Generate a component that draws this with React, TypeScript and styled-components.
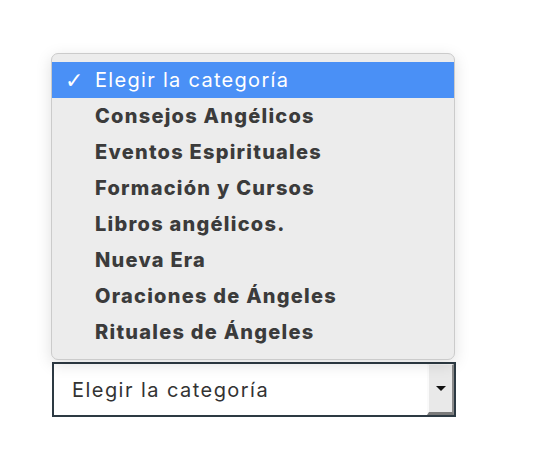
import React from 'react';
import styled, { createGlobalStyle } from 'styled-components';

const GlobalStyle = createGlobalStyle`
  html, body {
    margin: 0;
    padding: 0;
    background: #fff;
  }
  body {
    font-family: Inter, 'Noto Sans', sans-serif;
  }
`;

const Page = styled.div`
  width: 538px;
  height: 456px;
  box-sizing: border-box;
  padding: 53px 0 0 51px;
`;

// popup list of the native select; its shadow falls over the field below
const Menu = styled.ul`
  position: relative;
  z-index: 1;
  list-style: none;
  margin: 0;
  width: 404px;
  box-sizing: border-box;
  padding: 8px 0 9px;
  background: #ececec;
  border: 1px solid #cbcbcb;
  border-radius: 7px;
  box-shadow: 0 4px 16px rgba(0, 0, 0, 0.13);
`;

const Option = styled.li<{ $selected?: boolean }>`
  display: flex;
  align-items: center;
  height: 36px;
  padding: 0 0 0 13px;
  font-size: 20px;
  letter-spacing: ${({ $selected }) => ($selected ? '1.3px' : '1.25px')};
  font-weight: ${({ $selected }) => ($selected ? 400 : 800)};
  color: ${({ $selected }) => ($selected ? '#fff' : '#3b3b3b')};
  background: ${({ $selected }) => ($selected ? '#4a90f6' : 'transparent')};
  white-space: nowrap;
`;

const Check = styled.span`
  width: 30px;
  font-family: 'DejaVu Sans', sans-serif;
  font-size: 22px;
  font-weight: 700;
  letter-spacing: 0;
`;

const Select = styled.div`
  display: flex;
  align-items: stretch;
  width: 404px;
  height: 55px;
  margin: 2px 0 0 1px;
  box-sizing: border-box;
  border: 2px solid #2d3a43;
  background: #fff;
`;

const Value = styled.div`
  flex: 1;
  display: flex;
  align-items: center;
  padding-left: 18px;
  font-size: 20px;
  letter-spacing: 1.45px;
  color: #333;
`;

const ArrowButton = styled.div`
  width: 27px;
  display: flex;
  align-items: center;
  justify-content: center;
  background: #e9e9e9;
  border-style: solid;
  border-width: 1px 2px 3px 2px;
  border-color: #f4f4f4 #8a8a8a #7a7a7a #fafafa;
  box-sizing: border-box;
`;

const Arrow = styled.span`
  width: 0;
  height: 0;
  border-left: 5px solid transparent;
  border-right: 5px solid transparent;
  border-top: 5px solid #111;
`;

const items = [
  'Consejos Angélicos',
  'Eventos Espirituales',
  'Formación y Cursos',
  'Libros angélicos.',
  'Nueva Era',
  'Oraciones de Ángeles',
  'Rituales de Ángeles',
];

export default function App() {
  return (
    <Page>
      <GlobalStyle />
      <Menu>
        <Option $selected>
          <Check>✓</Check>
          Elegir la categoría
        </Option>
        {items.map((label) => (
          <Option key={label}>
            <Check />
            {label}
          </Option>
        ))}
      </Menu>
      <Select>
        <Value>Elegir la categoría</Value>
        <ArrowButton>
          <Arrow />
        </ArrowButton>
      </Select>
    </Page>
  );
}
